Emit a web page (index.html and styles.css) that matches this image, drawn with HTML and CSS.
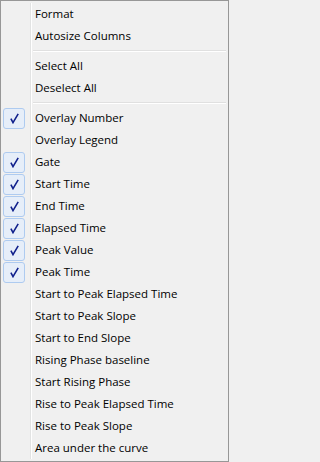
FILE: index.html
```html
<!DOCTYPE html>
<html>
<head>
<meta charset="utf-8">
<link rel="stylesheet" href="styles.css">
</head>
<body>
<div class="menu">
  <div class="item"><span class="gutter"></span><span class="label">Format</span></div>
  <div class="item"><span class="gutter"></span><span class="label">Autosize Columns</span></div>
  <div class="sep"><span class="gutter"></span><span class="line"></span></div>
  <div class="item"><span class="gutter"></span><span class="label">Select All</span></div>
  <div class="item"><span class="gutter"></span><span class="label">Deselect All</span></div>
  <div class="sep"><span class="gutter"></span><span class="line"></span></div>
  <div class="item"><span class="gutter"><span class="check"><svg width="9" height="11" viewBox="0 0 9 11"><path d="M0.9 5.6 L3 9.6 L8.2 0.9" fill="none" stroke="#10208c" stroke-width="1.6"/></svg></span></span><span class="label">Overlay Number</span></div>
  <div class="item"><span class="gutter"></span><span class="label">Overlay Legend</span></div>
  <div class="item"><span class="gutter"><span class="check"><svg width="9" height="11" viewBox="0 0 9 11"><path d="M0.9 5.6 L3 9.6 L8.2 0.9" fill="none" stroke="#10208c" stroke-width="1.6"/></svg></span></span><span class="label">Gate</span></div>
  <div class="item"><span class="gutter"><span class="check"><svg width="9" height="11" viewBox="0 0 9 11"><path d="M0.9 5.6 L3 9.6 L8.2 0.9" fill="none" stroke="#10208c" stroke-width="1.6"/></svg></span></span><span class="label">Start Time</span></div>
  <div class="item"><span class="gutter"><span class="check"><svg width="9" height="11" viewBox="0 0 9 11"><path d="M0.9 5.6 L3 9.6 L8.2 0.9" fill="none" stroke="#10208c" stroke-width="1.6"/></svg></span></span><span class="label">End Time</span></div>
  <div class="item"><span class="gutter"><span class="check"><svg width="9" height="11" viewBox="0 0 9 11"><path d="M0.9 5.6 L3 9.6 L8.2 0.9" fill="none" stroke="#10208c" stroke-width="1.6"/></svg></span></span><span class="label">Elapsed Time</span></div>
  <div class="item"><span class="gutter"><span class="check"><svg width="9" height="11" viewBox="0 0 9 11"><path d="M0.9 5.6 L3 9.6 L8.2 0.9" fill="none" stroke="#10208c" stroke-width="1.6"/></svg></span></span><span class="label">Peak Value</span></div>
  <div class="item"><span class="gutter"><span class="check"><svg width="9" height="11" viewBox="0 0 9 11"><path d="M0.9 5.6 L3 9.6 L8.2 0.9" fill="none" stroke="#10208c" stroke-width="1.6"/></svg></span></span><span class="label">Peak Time</span></div>
  <div class="item"><span class="gutter"></span><span class="label">Start to Peak Elapsed Time</span></div>
  <div class="item"><span class="gutter"></span><span class="label">Start to Peak Slope</span></div>
  <div class="item"><span class="gutter"></span><span class="label">Start to End Slope</span></div>
  <div class="item"><span class="gutter"></span><span class="label">Rising Phase baseline</span></div>
  <div class="item"><span class="gutter"></span><span class="label">Start Rising Phase</span></div>
  <div class="item"><span class="gutter"></span><span class="label">Rise to Peak Elapsed Time</span></div>
  <div class="item"><span class="gutter"></span><span class="label">Rise to Peak Slope</span></div>
  <div class="item"><span class="gutter"></span><span class="label">Area under the curve</span></div>
</div>
</body>
</html>
```

FILE: styles.css
```css
html, body {
  margin: 0;
  padding: 0;
  background: #f0f0f0;
}
.menu {
  box-sizing: border-box;
  width: 229px;
  height: 462px;
  border: 1px solid #979797;
  padding: 2px;
  background: #f0f0f0;
  font-family: "Open Sans", "DejaVu Sans", sans-serif;
  font-size: 11.5px;
  color: #000;
  display: flex;
  flex-direction: column;
}
.item {
  height: 22px;
  display: flex;
  align-items: center;
}
.gutter {
  box-sizing: border-box;
  width: 28px;
  align-self: stretch;
  border-right: 1px solid #e2e3e3;
  box-shadow: 1px 0 0 #ffffff;
  display: flex;
  align-items: center;
  flex-shrink: 0;
}
.label {
  padding-left: 4px;
  white-space: nowrap;
  line-height: 22px;
}
.check {
  box-sizing: border-box;
  width: 22px;
  height: 21px;
  border: 1px solid #aecbf0;
  border-radius: 3px;
  background: #e6eef9;
  display: flex;
  align-items: center;
  justify-content: center;
}
.check svg {
  margin-left: 1px;
}
.sep {
  height: 8px;
  display: flex;
}
.sep .line {
  flex: 1;
  margin-left: 2px;
  margin-top: 3px;
  height: 1px;
  border-bottom: 1px solid #ffffff;
  background: #e0e0e0;
}
```
